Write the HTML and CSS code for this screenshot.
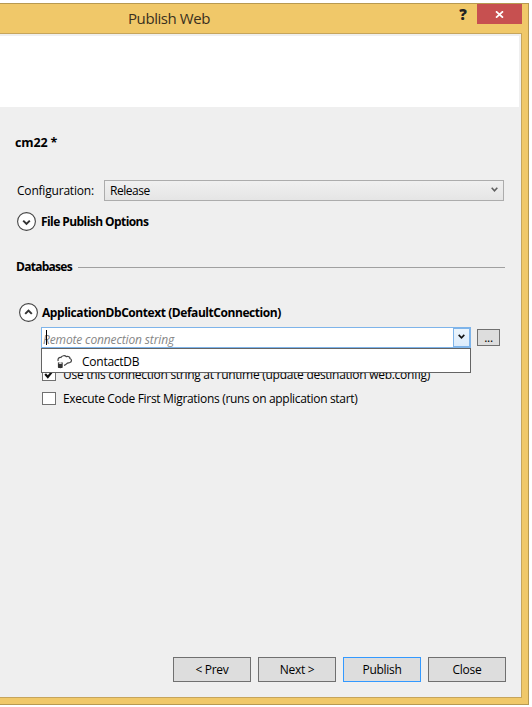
FILE: index.html
```html
<!DOCTYPE html>
<html lang="en">
<head>
<meta charset="utf-8">
<title>Publish Web</title>
<link rel="stylesheet" href="styles.css">
</head>
<body>
<div class="window">
  <header class="titlebar">
    <h1 class="title"><span>Publish Web</span></h1>
    <span class="help">?</span>
    <button class="close" aria-label="Close window"><svg width="9" height="7" viewBox="0 0 9 7"><path d="M1 0.3L8 6.7M8 0.3L1 6.7" stroke="#fff" stroke-width="1.7"/></svg></button>
  </header>
  <main class="client">
    <div class="banner"></div>
    <h2 class="profile"><span>cm22 *</span></h2>
    <div class="config">
      <label class="config-label"><span>Configuration:</span></label>
      <div class="select"><span>Release</span><svg class="chevron" width="7" height="6" viewBox="0 0 7 6"><path d="M0.7 0.8L3.5 3.8L6.3 0.8" fill="none" stroke="#606060" stroke-width="1.6"/></svg></div>
    </div>
    <div class="expander options">
      <svg width="19" height="19" viewBox="0 0 19 19"><circle cx="9.5" cy="9.5" r="8.9" fill="#fff" stroke="#444" stroke-width="1.1"/><path d="M6.2 8.6L9.5 11.9L12.8 8.6" fill="none" stroke="#333" stroke-width="2"/></svg>
      <span class="t-options">File Publish Options</span>
    </div>
    <div class="section"><span class="t-databases">Databases</span><i class="rule"></i></div>
    <div class="expander context">
      <svg width="19" height="19" viewBox="0 0 19 19"><circle cx="9.5" cy="9.5" r="8.9" fill="#fff" stroke="#444" stroke-width="1.1"/><path d="M6.2 10.9L9.5 7.6L12.8 10.9" fill="none" stroke="#333" stroke-width="2"/></svg>
      <span class="t-context">ApplicationDbContext (DefaultConnection)</span>
    </div>
    <div class="connection">
      <div class="combo">
        <i class="caret"></i>
        <span class="placeholder">Remote connection string</span>
        <button class="drop" aria-label="Show connections"><svg class="chevron" width="7" height="6" viewBox="0 0 7 6"><path d="M0.7 0.9L3.5 3.9L6.3 0.9" fill="none" stroke="#111" stroke-width="1.6"/></svg></button>
        <div class="popup">
          <svg width="16" height="14" viewBox="0 0 16 14"><path d="M1.2 6C.5 3.6 2 2.2 3.9 2.5C4.8.6 8 .1 9.2 1.6C11.3.8 13.2 2 12.9 3.5C15 4.2 15 7 12.9 7.5C11.8 8 10.6 7.8 9.8 8.6C9 9.6 8 10.2 7 10.3" fill="none" stroke="#444" stroke-width="1.2"/><path d="M.9 7.7C.9 6.6 5.7 6.6 5.7 7.7V12.3C5.7 13.5 .9 13.5 .9 12.3Z" fill="#333"/><ellipse cx="3.3" cy="8" rx="1.7" ry=".9" fill="#ddd"/></svg>
          <span class="t-contact">ContactDB</span>
        </div>
      </div>
      <button class="browse">...</button>
    </div>
    <div class="check first"><i class="box"><svg width="12" height="11" viewBox="0 0 12 11"><path d="M2.2 5L4.8 8L9.8 1.9" fill="none" stroke="#111" stroke-width="2.1"/></svg></i><span class="t-use">Use this connection string at runtime (update destination web.config)</span></div>
    <div class="check"><i class="box"></i><span class="t-execute">Execute Code First Migrations (runs on application start)</span></div>
    <footer class="actions">
      <button class="action">&lt; Prev</button>
      <button class="action">Next &gt;</button>
      <button class="action default">Publish</button>
      <button class="action">Close</button>
    </footer>
  </main>
</div>
</body>
</html>
```
FILE: styles.css
```css
* { box-sizing: border-box; }
body {
  margin: 0;
  padding-top: 3px;
  height: 707px;
  overflow: hidden;
  background: #fff;
  color: #000;
  font: 12px/16px "Open Sans", "Noto Sans", sans-serif;
  letter-spacing: -0.25px;
  white-space: nowrap;
}
svg { display: block; flex: none; }
button { font: inherit; color: inherit; letter-spacing: inherit; padding: 0; margin: 0; border-radius: 0; }
.window {
  width: 529px;
  height: 702px;
  display: flex;
  flex-direction: column;
  background: #f0c869;
  border: solid #b79951;
  border-width: 1px 1px 1px 0;
  padding: 0 6px 6px 0;
}
.titlebar { display: flex; height: 29px; flex: none; align-items: flex-start; }
.title { margin: 0; padding-left: 128px; flex: 1; font-size: 15px; font-weight: 400; line-height: 29px; color: #3a3020; letter-spacing: -0.42px; }
.help { width: 10px; margin-right: 9px; font-size: 15px; font-weight: 800; line-height: 20px; color: #222; text-align: center; }
.close { width: 45px; height: 20px; border: 0; background: #c75050; display: flex; align-items: center; justify-content: center; }
.client {
  flex: 1;
  min-height: 0;
  display: flex;
  flex-direction: column;
  background: #efefef;
  border: solid #c6a55c;
  border-width: 1px 1px 1px 0;
  padding-top: 2px;
}
.banner { height: 71px; flex: none; margin-right: 2px; background: #fff; }
.profile { margin: 28px 0 0 15px; font-size: 12.5px; line-height: 16px; font-weight: 700; letter-spacing: -0.15px; }
.config { display: flex; align-items: center; height: 21px; margin: 29px 0 0 17px; }
.config-label { width: 87px; letter-spacing: -0.2px; }
.select { width: 400px; height: 21px; border: 1px solid #acacac; background: linear-gradient(#f0f0f0, #e5e5e5); display: flex; align-items: center; justify-content: space-between; padding: 0 5px; letter-spacing: -0.45px; }
.chevron { margin-bottom: 2px; }
.expander { display: flex; align-items: center; height: 19px; font-weight: 700; }
.options { gap: 5px; margin: 11px 0 0 17px; letter-spacing: -0.57px; }
.section { display: flex; align-items: center; gap: 6px; height: 16px; margin: 28px 16px 0 16px; font-weight: 700; letter-spacing: -0.73px; }
.rule { flex: 1; height: 1px; background: #a0a0a0; }
.context { gap: 4px; margin: 28px 0 0 19px; letter-spacing: -0.44px; }
.connection { display: flex; align-items: center; gap: 6px; height: 21px; margin: 5px 0 0 41px; }
.combo { position: relative; width: 430px; height: 21px; border: 1px solid #7eb4ea; background: #fff; display: flex; align-items: center; padding-left: 1px; }
.caret { position: absolute; left: 4px; top: 2px; width: 1px; height: 15px; background: #000; }
.placeholder { flex: 1; padding-top: 5px; font-style: italic; color: #868686; letter-spacing: -0.14px; }
.drop { width: 17px; height: 19px; border: 1px solid #7eb4ea; background: linear-gradient(#ebf4fc, #dcecfc); display: flex; align-items: center; justify-content: center; }
.popup { position: absolute; z-index: 1; left: -1px; top: 20px; width: 430px; height: 25px; border: 1px solid #646464; background: #fff; display: flex; align-items: center; gap: 9px; padding: 2px 0 0 15px; }
.browse { width: 23px; height: 17px; border: 1px solid #707070; background: #ddd; line-height: 15px; }
.check { display: flex; align-items: center; gap: 7px; height: 16px; margin: 8px 0 0 42px; }
.first { margin-top: 19px; }
.t-use { letter-spacing: -0.28px; }
.t-execute { letter-spacing: -0.32px; }
.box { width: 14px; height: 13px; margin-bottom: 1px; border: 1px solid #707070; background: #fff; }
.actions { display: flex; gap: 7px; margin: auto 15px 15px auto; }
.action { width: 78px; height: 25px; border: 1px solid #707070; background: #ddd; letter-spacing: -0.3px; }
.default { border-color: #3399ff; }
```
